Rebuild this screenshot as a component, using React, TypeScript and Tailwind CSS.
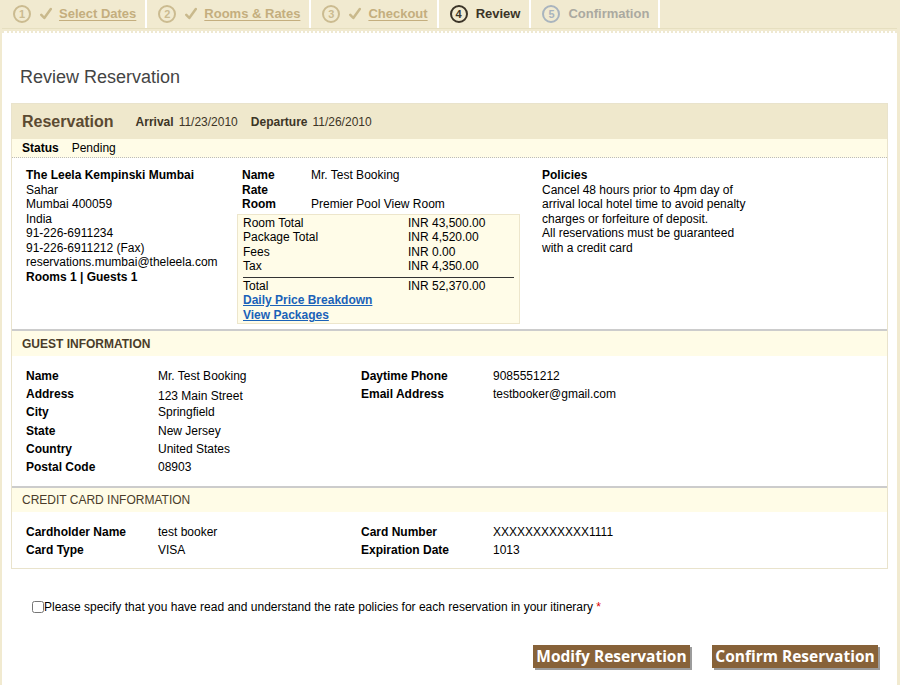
import React from "react";

const steps = [
  { n: 1, label: "Select Dates", state: "done" },
  { n: 2, label: "Rooms & Rates", state: "done" },
  { n: 3, label: "Checkout", state: "done" },
  { n: 4, label: "Review", state: "current" },
  { n: 5, label: "Confirmation", state: "todo" },
];

function Check() {
  return (
    <svg width="12" height="14" viewBox="0 0 12 14" className="shrink-0 ml-[9px] mr-[7px]">
      <path d="M1.3 7.8 L4.3 11 L10.8 2" fill="none" stroke="#c9b98c" strokeWidth="2.5" strokeLinecap="round" strokeLinejoin="round" />
    </svg>
  );
}

function Step({ n, label, state }: { n: number; label: string; state: string }) {
  const circle =
    state === "done"
      ? "border-[#cbbb90] text-[#cbbb90]"
      : state === "current"
      ? "border-[#3b3428] text-[#3b3428]"
      : "border-[#a9b4be] text-[#a9b4be]";
  const text =
    state === "done"
      ? "text-[#c4ae7e] underline underline-offset-2"
      : state === "current"
      ? "text-[#3b3428]"
      : "text-[#aba9a0]";
  return (
    <div className="flex items-center h-full pl-[11px] pr-[9px] border-r-2 border-white">
      <div className={`w-[18px] h-[18px] rounded-full border-2 flex items-center justify-center text-[11px] font-bold ${circle}`}>
        {n}
      </div>
      {state === "done" ? <Check /> : <div className="w-[8px]" />}
      <span className={`text-[13px] font-bold ${text}`}>{label}</span>
    </div>
  );
}

function Row({ label, value, w = "w-[132px]" }: { label: string; value: string; w?: string }) {
  return (
    <div className="flex h-[18.3px] items-center">
      <div className={`${w} font-bold`}>{label}</div>
      <div>{value}</div>
    </div>
  );
}

export default function App() {
  return (
    <div
      className="w-[900px] h-[685px] bg-[#f1ead0] pl-[2px] pr-[3px] text-[12px] text-black overflow-hidden"
      style={{ fontFamily: '"Liberation Sans", Arial, sans-serif' }}
    >
      {/* step nav */}
      <div className="h-[29px] flex border-b border-[#e6dfc0]">
        {steps.map((s) => (
          <Step key={s.n} {...s} />
        ))}
      </div>

      <div className="bg-white h-[700px] mt-[2px] border-t-2 border-dotted border-[#efe9d2]">
        <h1 className="text-[18px] text-[#444] pl-[18px] pt-[33px] leading-[22px]">Review Reservation</h1>

        <div className="mx-[9px] mt-[15px] border border-[#e9e3cc]">
          {/* header */}
          <div className="h-[35px] bg-[#efe8cc] flex items-center pl-[10px] text-[#3d3526]">
            <span className="text-[16px] font-bold text-[#5b4a31] mr-[22px]">Reservation</span>
            <span className="font-bold mr-[5px]">Arrival</span>
            <span className="mr-[13px]">11/23/2010</span>
            <span className="font-bold mr-[5px]">Departure</span>
            <span>11/26/2010</span>
          </div>
          <div className="h-[19px] bg-[#fffce7] flex items-center pl-[10px] border-b border-dotted border-[#bbb]">
            <span className="font-bold mr-[13px]">Status</span>
            <span>Pending</span>
          </div>

          {/* reservation body */}
          <div className="flex pt-[10px] pb-[5px] leading-[14.5px]">
            <div className="w-[225px] pl-[14px]">
              <div className="font-bold">The Leela Kempinski Mumbai</div>
              <div>Sahar</div>
              <div>Mumbai 400059</div>
              <div>India</div>
              <div>91-226-6911234</div>
              <div>91-226-6911212 (Fax)</div>
              <div>reservations.mumbai@theleela.com</div>
              <div className="font-bold">Rooms 1 | Guests 1</div>
            </div>
            <div className="w-[283px]">
              <div className="pl-[5px]">
                <div className="flex"><span className="w-[69px] font-bold">Name</span><span>Mr. Test Booking</span></div>
                <div className="flex"><span className="w-[69px] font-bold">Rate</span><span></span></div>
                <div className="flex"><span className="w-[69px] font-bold">Room</span><span>Premier Pool View Room</span></div>
              </div>
              <div className="mt-[2px] bg-[#fffce8] border border-[#ede6cc] pl-[5px] pr-[5px] pt-[1px] pb-[1px]">
                <div className="flex"><span className="w-[165px]">Room Total</span><span>INR 43,500.00</span></div>
                <div className="flex"><span className="w-[165px]">Package Total</span><span>INR 4,520.00</span></div>
                <div className="flex"><span className="w-[165px]">Fees</span><span>INR 0.00</span></div>
                <div className="flex"><span className="w-[165px]">Tax</span><span>INR 4,350.00</span></div>
                <div className="border-t border-[#333] mt-[3px] pt-[1px] flex"><span className="w-[165px]">Total</span><span>INR 52,370.00</span></div>
                <div className="leading-[15px]"><a href="#" className="font-bold text-[#1a62b8] underline">Daily Price Breakdown</a></div>
                <div className="leading-[14px]"><a href="#" className="font-bold text-[#1a62b8] underline">View Packages</a></div>
              </div>
            </div>
            <div className="pl-[22px] w-[230px]">
              <div className="font-bold">Policies</div>
              <div>
                Cancel 48 hours prior to 4pm day of arrival local hotel time to avoid penalty charges or forfeiture of deposit.
              </div>
              <div>All reservations must be guaranteed with a credit card</div>
            </div>
          </div>

          {/* guest information */}
          <div className="border-t-2 border-[#ccc]">
            <div className="h-[25px] bg-[#fffce7] flex items-center pl-[10px] font-bold text-[#4a3c2a]">GUEST INFORMATION</div>
            <div className="flex pl-[14px] pt-[11px] pb-[10px]">
              <div className="w-[335px]">
                <Row label="Name" value="Mr. Test Booking" />
                <div className="flex h-[18px]">
                  <div className="w-[132px] font-bold">Address</div>
                  <div className="pt-[2px]">123 Main Street</div>
                </div>
                <Row label="City" value="Springfield" />
                <Row label="State" value="New Jersey" />
                <Row label="Country" value="United States" />
                <Row label="Postal Code" value="08903" />
              </div>
              <div>
                <Row label="Daytime Phone" value="9085551212" />
                <Row label="Email Address" value="testbooker@gmail.com" />
              </div>
            </div>
          </div>

          {/* credit card */}
          <div className="border-t-2 border-[#ccc]">
            <div className="h-[24px] bg-[#fffce7] flex items-center pl-[10px] text-[#4a3c2a]">CREDIT CARD INFORMATION</div>
            <div className="flex pl-[14px] pt-[10px] pb-[9px]">
              <div className="w-[335px]">
                <Row label="Cardholder Name" value="test booker" />
                <Row label="Card Type" value="VISA" />
              </div>
              <div>
                <Row label="Card Number" value="XXXXXXXXXXXX1111" />
                <Row label="Expiration Date" value="1013" />
              </div>
            </div>
          </div>
        </div>

        {/* agreement */}
        <label className="flex items-center mt-[29px] ml-[30px] text-[12px]">
          <input type="checkbox" className="w-[12px] h-[12px] m-0" />
          <span>
            Please specify that you have read and understand the rate policies for each reservation in your itinerary{" "}
            <span className="text-[#d00]">*</span>
          </span>
        </label>

        <div className="flex justify-end gap-[22px] mr-[19px] mt-[29px]">
          <button
            className="h-[23px] w-[157px] bg-[#876239] text-white text-[15.5px] font-bold shadow-[2px_2px_0_#9c9c9c] leading-none"
            style={{ fontFamily: '"Open Sans", sans-serif' }}
          >
            Modify Reservation
          </button>
          <button
            className="h-[23px] w-[166px] bg-[#876239] text-white text-[15.5px] font-bold shadow-[2px_2px_0_#9c9c9c] leading-none"
            style={{ fontFamily: '"Open Sans", sans-serif' }}
          >
            Confirm Reservation
          </button>
        </div>
      </div>
    </div>
  );
}
